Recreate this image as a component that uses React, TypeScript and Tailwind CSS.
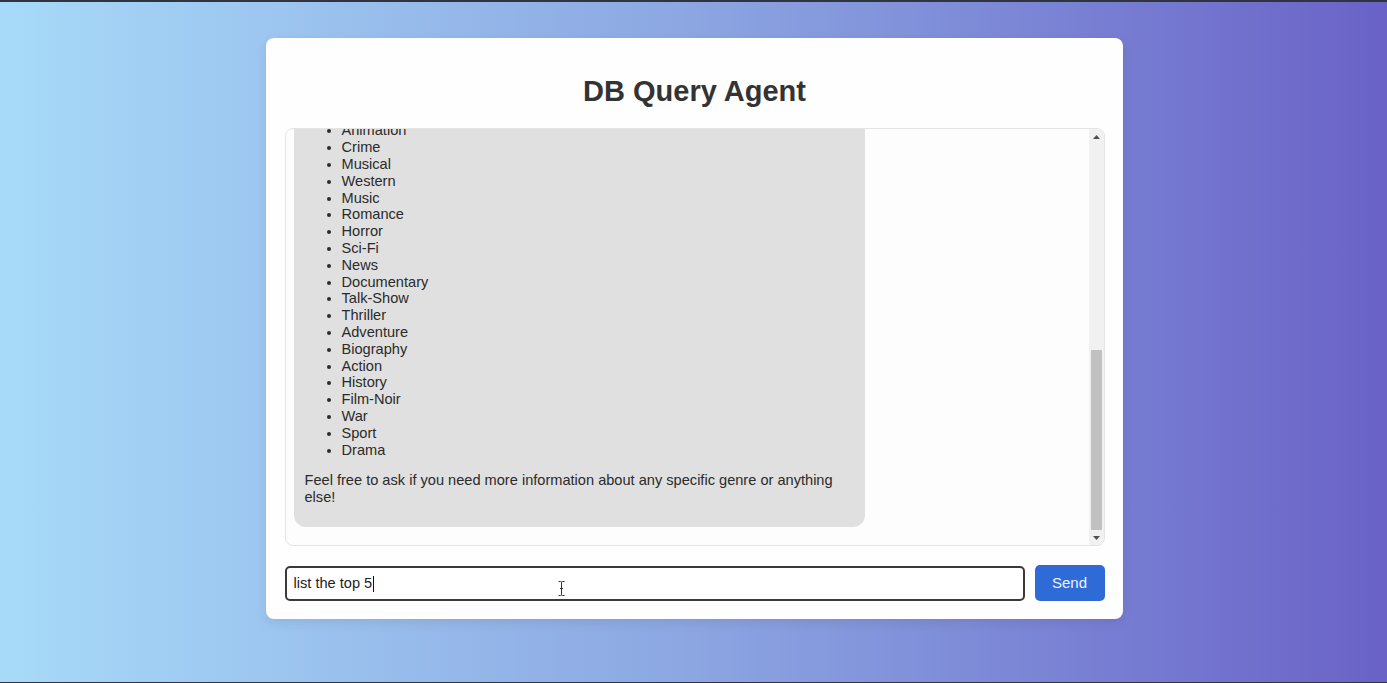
import React from "react";

const genres = [
  "Comedy",
  "Family",
  "Fantasy",
  "Mystery",
  "Animation",
  "Crime",
  "Musical",
  "Western",
  "Music",
  "Romance",
  "Horror",
  "Sci-Fi",
  "News",
  "Documentary",
  "Talk-Show",
  "Thriller",
  "Adventure",
  "Biography",
  "Action",
  "History",
  "Film-Noir",
  "War",
  "Sport",
  "Drama",
];

export default function App() {
  return (
    <div
      className="h-[683px] w-full overflow-hidden border-t-2 border-b border-[#2f3440] bg-gradient-to-r from-[#a7daf8] via-[#8ca6e2] to-[#6a62c7] pl-px pt-[36px]"
      style={{ fontFamily: '"Liberation Sans", Arial, sans-serif' }}
    >
      <div className="mx-auto flex w-[857px] flex-col rounded-lg bg-[#fefefe] pl-[19px] pr-[18px] pb-[18px] pt-[37px] shadow-[0_4px_12px_rgba(0,0,0,0.08)]">
        <h1 className="mb-[20px] text-center text-[29px] font-bold leading-[33px] text-[#333333]">
          DB Query Agent
        </h1>

        <div className="flex h-[418px] overflow-hidden rounded-lg border border-[#e4e4e4] bg-[#fdfdfd]">
          <div className="flex flex-1 flex-col justify-end overflow-hidden px-2 pb-[18px]">
            <div className="w-[571px] rounded-xl bg-[#e0e0e0] pl-[11px] pr-[10px] pb-[21px] text-[14.6px] leading-[16.8px] text-[#2b2b2b]">
              <ul className="mb-[14px] list-disc pl-[37px]">
                {genres.map((g) => (
                  <li key={g}>{g}</li>
                ))}
              </ul>
              <p>
                Feel free to ask if you need more information about any specific
                genre or anything else!
              </p>
            </div>
          </div>
          <div className="flex w-[15px] flex-col bg-[#f1f1f1]">
            <div className="flex h-[16px] items-center justify-center">
              <svg width="7" height="4" viewBox="0 0 7 4">
                <path d="M0 4 L3.5 0 L7 4 Z" fill="#505050" />
              </svg>
            </div>
            <div className="flex-1" />
            <div className="mx-[2px] h-[180px] bg-[#c1c1c1]" />
            <div className="flex h-[15px] items-center justify-center">
              <svg width="7" height="4" viewBox="0 0 7 4">
                <path d="M0 0 L7 0 L3.5 4 Z" fill="#505050" />
              </svg>
            </div>
          </div>
        </div>

        <div className="mt-[19px] flex items-center gap-[10px]">
          <div className="relative flex h-[35px] flex-1 items-center rounded-[5px] border-2 border-[#3a3a3a] bg-white px-[7px] pt-px text-[14.6px] text-[#222222]">
            <span>list the top 5</span>
            <span className="ml-px h-[16px] w-px bg-[#111111]" />
            <svg
              className="absolute left-[271px] top-[13px]"
              width="7"
              height="15"
              viewBox="0 0 7 15"
            >
              <path
                d="M0.5 0.5 H2.5 Q3.5 0.5 3.5 1.5 Q3.5 0.5 4.5 0.5 H6.5 M3.5 1.5 V13.5 M0.5 14.5 H2.5 Q3.5 14.5 3.5 13.5 Q3.5 14.5 4.5 14.5 H6.5 M2 7.5 H5"
                stroke="#333"
                strokeWidth="1"
                fill="none"
              />
            </svg>
          </div>
          <button className="h-[36px] w-[70px] rounded-[5px] bg-[#2e6bd6] text-[15px] text-[#eef3fd]">
            Send
          </button>
        </div>
      </div>
    </div>
  );
}
